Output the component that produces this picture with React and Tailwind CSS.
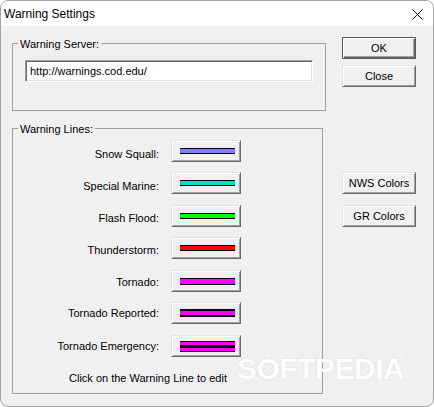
const font = { fontFamily: '"Liberation Sans", Arial, sans-serif' };

const raised =
  "border border-t-[#e3e3e3] border-l-[#e3e3e3] border-r-[#696969] border-b-[#696969] bg-[#f0f0f0] shadow-[inset_1px_1px_0_#ffffff,inset_-1px_-1px_0_#a0a0a0]";

// stripes are [color, px height] from top to bottom; labels drift up a little against the buttons
const warningLines = [
  { name: "Snow Squall:", row: "h-[32px]", pad: "pt-[8px]", stripes: [["#000", 1], ["#8080ff", 4], ["#000", 1]] },
  { name: "Special Marine:", row: "h-[33px]", pad: "pt-[8px]", stripes: [["#000", 1], ["#00dccb", 4], ["#000", 1]] },
  { name: "Flash Flood:", row: "h-[32px]", pad: "pt-[7px]", stripes: [["#000", 1], ["#00ff00", 4], ["#000", 1]] },
  { name: "Thunderstorm:", row: "h-[33px]", pad: "pt-[7px]", stripes: [["#000", 1], ["#ff0000", 4], ["#000", 1]] },
  { name: "Tornado:", row: "h-[32px]", pad: "pt-[6px]", stripes: [["#000", 1], ["#ff00ff", 5], ["#000", 1]] },
  { name: "Tornado Reported:", row: "h-[33px]", pad: "pt-[5px]", stripes: [["#000", 2], ["#ff00ff", 4], ["#000", 2]] },
  {
    name: "Tornado Emergency:",
    row: "h-[22px]",
    pad: "pt-[5px]",
    stripes: [["#000", 1], ["#ff00ff", 3], ["#000", 3], ["#ff00ff", 3], ["#000", 1]],
  },
];

function GroupBox({ label, className, children }) {
  return (
    <div className={`relative border border-[#a0a0a0] ${className}`}>
      <span className="absolute left-[5px] top-[-6px] bg-[#f0f0f0] px-[2px] text-[11px] leading-[13px] text-black">
        {label}
      </span>
      {children}
    </div>
  );
}

function LineSwatch({ stripes }) {
  return (
    <button className={`ml-[12px] flex h-[22px] w-[70px] items-center pl-[8px] ${raised}`}>
      <div className="flex w-[55px] flex-col">
        {stripes.map(([color, h], i) => (
          <div key={i} className="w-full" style={{ backgroundColor: color, height: h }} />
        ))}
      </div>
    </button>
  );
}

export default function App() {
  return (
    <div
      className="relative flex h-[407px] w-[434px] flex-col overflow-hidden rounded-[8px] border border-[#a3a3a3] bg-[#f0f0f0] text-black"
      style={font}
    >
      {/* title bar */}
      <div className="flex h-[25px] shrink-0 items-center justify-between bg-white">
        <span className="pl-[3px] pt-[2px] text-[12px] leading-[25px]">Warning Settings</span>
        <svg className="mr-[10px] mt-[1px]" width="11" height="11" viewBox="0 0 11 11">
          <path d="M0.5 0.5L10.5 10.5M10.5 0.5L0.5 10.5" stroke="#111" strokeWidth="1" fill="none" />
        </svg>
      </div>

      <div className="flex flex-1">
        {/* left column */}
        <div className="ml-[11px] mt-[17px] flex w-[314px] flex-col">
          <GroupBox label="Warning Server:" className="h-[68px] w-[314px]">
            <div className="ml-[12px] mt-[16px] flex h-[22px] w-[288px] items-center border border-t-[#a0a0a0] border-l-[#a0a0a0] border-r-white border-b-white bg-white pl-[4px] text-[11px] leading-[18px] shadow-[inset_1px_1px_0_#696969,inset_-1px_-1px_0_#e3e3e3]">
              http://warnings.cod.edu/
            </div>
          </GroupBox>

          <GroupBox label="Warning Lines:" className="mt-[17px] h-[266px] w-[311px]">
            <div className="flex flex-col pt-[11px]">
              {warningLines.map((line) => (
                <div key={line.name} className={`flex items-start ${line.row}`}>
                  <span className={`w-[146px] text-right text-[11px] leading-[13px] ${line.pad}`}>{line.name}</span>
                  <LineSwatch stripes={line.stripes} />
                </div>
              ))}
              <p className="ml-[56px] mt-[15px] text-[11px] leading-[13px]">Click on the Warning Line to edit</p>
            </div>
          </GroupBox>
        </div>

        {/* right column */}
        <div className="ml-[16px] mt-[11px] flex w-[74px] flex-col text-[11px]">
          <button className="h-[22px] w-[74px] border border-[#5a5a5a] bg-[#f0f0f0] shadow-[inset_1px_1px_0_#ffffff,inset_-1px_-1px_0_#696969,inset_-2px_-2px_0_#a0a0a0]">
            OK
          </button>
          <button className={`mt-[6px] h-[22px] w-[74px] ${raised}`}>Close</button>
          <button className={`mt-[85px] h-[22px] w-[74px] ${raised}`}>NWS Colors</button>
          <button className={`mt-[11px] h-[22px] w-[74px] ${raised}`}>GR Colors</button>
        </div>
      </div>

      {/* watermark */}
      <div className="pointer-events-none absolute left-[236px] top-[353px] flex items-start text-white [text-shadow:0_0_1px_#c4c4c4]">
        <span className="text-[30px] font-bold leading-[30px] tracking-[-0.5px]">SOFTPEDIA</span>
        <span className="ml-[2px] mt-[1px] text-[9px] leading-[9px]">®</span>
      </div>
    </div>
  );
}
